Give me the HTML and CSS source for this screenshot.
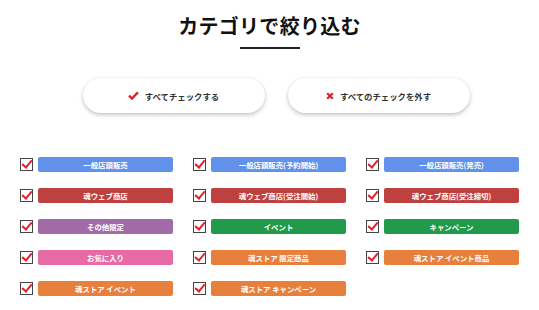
FILE: index.html
```html
<!DOCTYPE html>
<html lang="ja">
<head>
<meta charset="utf-8">
<link rel="stylesheet" href="styles.css">
</head>
<body>
<main class="page">
  <header class="head">
    <h1 class="title">カテゴリで絞り込む</h1>
    <span class="rule"></span>
  </header>
  <div class="actions">
    <button class="pill"><svg class="ico" viewBox="0 0 12 10" width="11" height="9"><path d="M1 5.2 L4.3 8.4 L11 1.4" fill="none" stroke="#d81f26" stroke-width="2.6" stroke-linejoin="miter"/></svg>すべてチェックする</button>
    <button class="pill"><svg class="ico" viewBox="0 0 10 10" width="8" height="8"><path d="M1.5 1.5 L8.5 8.5 M8.5 1.5 L1.5 8.5" fill="none" stroke="#d81f26" stroke-width="2.6"/></svg>すべてのチェックを外す</button>
  </div>
  <ul class="cats">
    <li class="cat"><span class="box"></span><span class="tag blue">一般店頭販売</span></li>
    <li class="cat"><span class="box"></span><span class="tag blue">一般店頭販売(予約開始)</span></li>
    <li class="cat"><span class="box"></span><span class="tag blue">一般店頭販売(発売)</span></li>
    <li class="cat"><span class="box"></span><span class="tag red">魂ウェブ商店</span></li>
    <li class="cat"><span class="box"></span><span class="tag red">魂ウェブ商店(受注開始)</span></li>
    <li class="cat"><span class="box"></span><span class="tag red">魂ウェブ商店(受注締切)</span></li>
    <li class="cat"><span class="box"></span><span class="tag purple">その他限定</span></li>
    <li class="cat"><span class="box"></span><span class="tag green">イベント</span></li>
    <li class="cat"><span class="box"></span><span class="tag green">キャンペーン</span></li>
    <li class="cat"><span class="box"></span><span class="tag pink">お気に入り</span></li>
    <li class="cat"><span class="box"></span><span class="tag orange">魂ストア 限定商品</span></li>
    <li class="cat"><span class="box"></span><span class="tag orange">魂ストア イベント商品</span></li>
    <li class="cat"><span class="box"></span><span class="tag orange">魂ストア イベント</span></li>
    <li class="cat"><span class="box"></span><span class="tag orange">魂ストア キャンペーン</span></li>
  </ul>
</main>
</body>
</html>
```

FILE: styles.css
```css
* { box-sizing: border-box; }
html, body { margin: 0; padding: 0; background: #fff; }
body {
  font-family: "Noto Sans CJK JP", "Noto Sans", sans-serif;
  color: #222;
}
.page { width: 539px; }
.head {
  display: flex;
  flex-direction: column;
  align-items: center;
  padding-top: 11px;
}
.title {
  margin: 0;
  font-size: 20px;
  line-height: 30px;
  font-weight: 700;
  color: #111;
  letter-spacing: 0.3px;
}
.rule {
  display: block;
  width: 60px;
  height: 2px;
  background: #222;
  margin-top: 6px;
}
.actions {
  display: flex;
  justify-content: center;
  gap: 23px;
  margin-top: 29px;
  padding-left: 13px;
}
.pill {
  width: 182px;
  height: 35px;
  border: none;
  border-radius: 18px;
  background: #fff;
  box-shadow: 0 2px 4px rgba(0,0,0,0.22), 0 0 2px rgba(0,0,0,0.08);
  display: flex;
  align-items: center;
  justify-content: center;
  gap: 6px;
  font-family: inherit;
  font-size: 8.4px;
  font-weight: 700;
  color: #333;
  padding: 0;
}
.ico { display: block; }
.cats {
  list-style: none;
  margin: 44px 0 0 20px;
  padding: 0;
  display: grid;
  grid-template-columns: repeat(3, 153px);
  column-gap: 20px;
  row-gap: 16px;
}
.cat {
  display: flex;
  align-items: center;
  gap: 5px;
  height: 15px;
}
.box {
  flex: none;
  width: 13px;
  height: 13px;
  border: 1px solid #444;
  background: #fff;
  position: relative;
}
.box::after {
  content: "";
  position: absolute;
  left: 3px;
  top: -1px;
  width: 4px;
  height: 8px;
  border-right: 2.6px solid #e0202a;
  border-bottom: 2.6px solid #e0202a;
  transform: rotate(40deg);
}
.tag {
  flex: 1;
  height: 15px;
  border-radius: 2px;
  display: flex;
  align-items: center;
  justify-content: center;
  color: #fff;
  font-size: 7.4px;
  font-weight: 700;
  white-space: nowrap;
}
.blue { background: #6291ec; }
.red { background: #be4140; }
.purple { background: #a16ba7; }
.green { background: #229a4b; }
.pink { background: #e56aa5; }
.orange { background: #e7803d; }
```
